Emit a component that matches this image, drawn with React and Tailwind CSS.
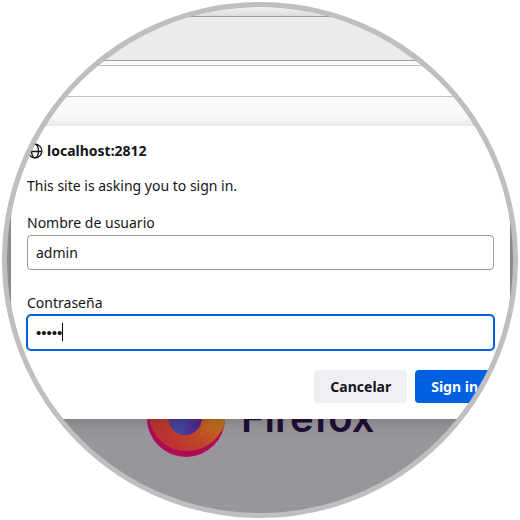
import React, { useState } from 'react';

const GlobeIcon = () => (
    <svg viewBox="0 0 16 16" className="h-4 w-4 shrink-0" fill="none" stroke="currentColor" strokeWidth="1.3">
        <circle cx="8" cy="8" r="6.9" />
        <ellipse cx="8" cy="8" rx="3.5" ry="6.9" />
        <path d="M1 8.5h14" />
    </svg>
);

const FirefoxLogo = () => (
    <svg viewBox="0 0 78 78" className="h-[78px] w-[78px] shrink-0">
        <defs>
            <linearGradient id="flame" x1="1" y1="0.4" x2="0.35" y2="0.95">
                <stop offset="0" stopColor="#b8861f" />
                <stop offset="0.3" stopColor="#c0661f" />
                <stop offset="0.6" stopColor="#be4a28" />
                <stop offset="1" stopColor="#bb3332" />
            </linearGradient>
            <linearGradient id="globe" x1="0" y1="0.4" x2="1" y2="0.6">
                <stop offset="0" stopColor="#5a3a8c" />
                <stop offset="0.45" stopColor="#40469f" />
                <stop offset="1" stopColor="#5a1c86" />
            </linearGradient>
        </defs>
        <circle cx="39" cy="39" r="39" fill="#b00a55" />
        <path d="M1 34C2 12 18 0 39 0s39 16 39 39c0 6-2 11-5 15-8 12-20 18-34 18C18 72 3 55 1 34z" fill="url(#flame)" />
        <path d="M55 46c6-2 10-4 13-8 0 9-6 17-18 20 3-3 5-7 5-12z" fill="#c09a20" opacity="0.15" />
        <circle cx="38" cy="39" r="17" fill="url(#globe)" />
    </svg>
);

const App = () => {
    const [formData, setFormData] = useState({ username: 'admin', password: 'admin' });

    const handleChange = (e) => {
        setFormData({ ...formData, [e.target.name]: e.target.value });
    };

    return (
        <div className="bg-white p-0.5">
            <div className="flex aspect-square w-full flex-col overflow-hidden rounded-full border-5 border-[#bfbfbf] bg-[#98959b] font-['Noto_Sans',sans-serif] text-sm leading-5 text-[#15141a]">
                {/* Browser chrome */}
                <div className="h-2.5 shrink-0 border-b border-[#999999] bg-linear-to-b from-[#f2f2f2] to-[#dcdcdc]" />
                <div className="h-11 shrink-0 border-b border-[#a0a0a0] bg-[#ebebeb]" />
                <div className="h-[5px] shrink-0 border-b border-[#bcbcbc] bg-[#fafafa]" />
                <div className="h-[31px] shrink-0 border-b border-[#c2c2c2] bg-white" />
                <div className="h-[29px] shrink-0 bg-[#fafafa]" />

                <main className="flex flex-1 flex-col">
                    {/* Sign in dialog */}
                    <form
                        onSubmit={(e) => e.preventDefault()}
                        className="relative z-10 mr-[3px] ml-1 bg-white px-4 pt-[15px] pb-4 shadow-[0_2px_14px_rgba(0,0,0,0.2)]"
                    >
                        <h1 className="flex items-center gap-1 font-bold">
                            <GlobeIcon />
                            localhost:2812
                        </h1>
                        <p className="mt-[15px]">This site is asking you to sign in.</p>

                        <label htmlFor="username" className="mt-[17px] block">Nombre de usuario</label>
                        <input
                            id="username"
                            name="username"
                            value={formData.username}
                            onChange={handleChange}
                            className="mt-0.5 block h-[35px] w-full rounded border border-[#9a999f] bg-white px-2 outline-none"
                        />

                        <label htmlFor="password" className="mt-[23px] block">Contraseña</label>
                        <div className="relative mt-0.5">
                            <input
                                id="password"
                                name="password"
                                type="password"
                                value={formData.password}
                                onChange={handleChange}
                                className="block h-[35px] w-full rounded border border-[#0061e0] bg-white px-2 font-['Liberation_Sans',sans-serif] text-[15px] ring-1 ring-[#0061e0] outline-none"
                            />
                            <span className="absolute top-2 left-[35px] h-[18px] w-px bg-black" />
                        </div>

                        <div className="mt-5 flex justify-end gap-2">
                            <button type="button" className="h-[33px] rounded bg-[#f0f0f4] px-4 font-bold">Cancelar</button>
                            <button type="submit" className="h-[33px] rounded bg-[#0061e0] px-4 font-bold text-[#fbfbfe]">Sign in</button>
                        </div>
                    </form>

                    {/* Start page behind the dialog */}
                    <div className="-mt-10 flex items-center gap-4 pl-[140px]">
                        <FirefoxLogo />
                        <span className="font-['Inter',sans-serif] text-[40px] leading-[52px] font-semibold text-[#1f0f33]">Firefox</span>
                    </div>
                    <div className="mt-12 flex-1 border-t border-[#9c999f]" />
                </main>
            </div>
        </div>
    );
};

export default App;
